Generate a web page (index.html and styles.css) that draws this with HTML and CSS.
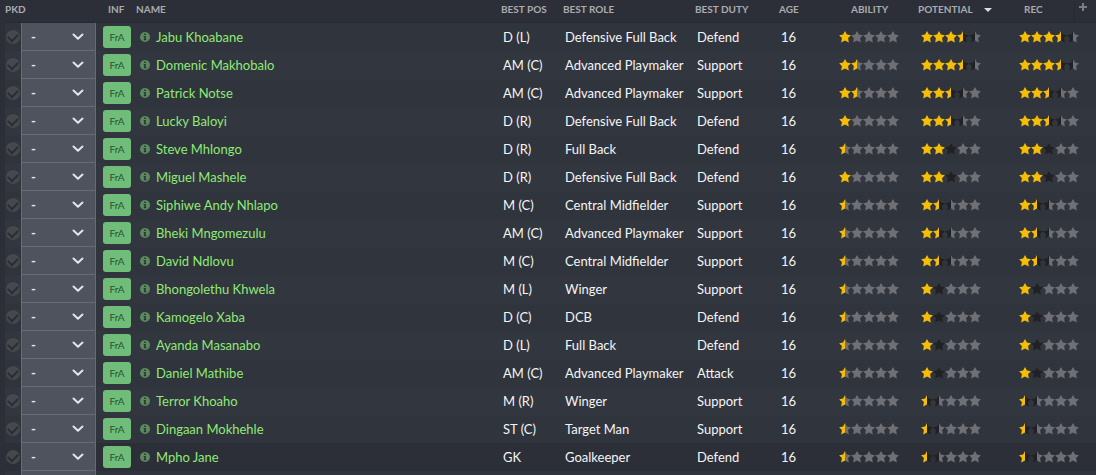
FILE: index.html
```html
<!DOCTYPE html>
<html lang="en">
<head>
    <meta charset="UTF-8">
    <meta name="viewport" content="width=device-width, initial-scale=1.0">
    <title>Squad</title>
    <link rel="stylesheet" href="styles.css">
</head>
<body>
    <svg class="sprite" aria-hidden="true">
        <symbol id="icon-chevron" viewBox="0 0 12 8">
            <path d="M1.5 1.5 6 5.8l4.5-4.3" fill="none" stroke="currentColor" stroke-width="2" stroke-linecap="round" stroke-linejoin="round"/>
        </symbol>
        <symbol id="icon-info" viewBox="0 0 10 10">
            <circle cx="5" cy="5" r="5" fill="#5b8a5e"/>
            <path d="M4.2 1.6h1.6v1.4H4.2zM3.7 4h2.1v3.2h.5v1H3.7v-1h.5V4.9h-.5z" fill="#2b3237"/>
        </symbol>
    </svg>

    <table class="squad">
        <colgroup>
            <col class="col-check">
            <col class="col-pick">
            <col class="col-inf">
            <col class="col-name">
            <col class="col-pos">
            <col class="col-role">
            <col class="col-duty">
            <col class="col-age">
            <col class="col-ability">
            <col class="col-potential">
            <col class="col-rec">
            <col class="col-add">
        </colgroup>
        <thead>
            <tr>
                <th colspan="2" class="head-pkd">PKD</th>
                <th class="head-inf">INF</th>
                <th class="head-name">NAME</th>
                <th>BEST POS</th>
                <th>BEST ROLE</th>
                <th>BEST DUTY</th>
                <th>AGE</th>
                <th class="head-ability">ABILITY</th>
                <th aria-sort="descending">POTENTIAL<span class="sort-arrow"></span></th>
                <th class="head-rec">REC</th>
                <th class="head-add"><button type="button" class="add-column" aria-label="Add column"></button></th>
            </tr>
        </thead>
        <tbody id="players"></tbody>
    </table>
    <script src="script.js"></script>
</body>
</html>
```

FILE: styles.css
```css
:root {
    --background: #2d2f38;
    --row: #30343c;
    --row-alt: #32363f;
    --line: #272a32;
    --select: #4e535e;
    --select-line: #666b77;
    --heading: #a9abae;
    --name: #8eea76;
    --badge: #6fbd78;
    --gold: #f6bd06;
    --dark: #202124;
    --grey: #6e7075;
}

* {
    margin: 0;
    padding: 0;
    box-sizing: border-box;
}

body {
    font-family: Lato, "Liberation Sans", sans-serif;
    font-size: 13px;
    color: #f4f5f6;
    background-color: var(--background);
}

.sprite {
    display: none;
}

.squad {
    width: 100%;
    padding-left: 5px;
    table-layout: fixed;
    border-collapse: separate;
    border-spacing: 0;
}

.col-check { width: 16px; }
.col-pick { width: 75px; }
.col-inf { width: 40px; }
.col-pos { width: 62px; }
.col-role { width: 132px; }
.col-duty { width: 84px; }
.col-age { width: 60px; }
.col-ability { width: 79px; }
.col-potential { width: 100px; }
.col-rec { width: 56px; }
.col-add { width: 22px; }

/* Header */
th {
    height: 23px;
    padding-bottom: 4px;
    border-bottom: 1px solid var(--line);
    font-size: 10px;
    font-weight: 700;
    line-height: 16px;
    color: var(--heading);
    text-align: left;
    vertical-align: middle;
    white-space: nowrap;
}

.head-inf {
    padding-left: 12px;
}

.head-ability {
    padding-left: 12px;
}

.head-rec {
    padding-left: 6px;
}

.sort-arrow {
    display: inline-block;
    margin-left: 11px;
    border: 4px solid transparent;
    border-top-color: #dcdddf;
    border-bottom: 0;
    vertical-align: middle;
}

.head-add {
    border-left: 1px solid var(--line);
}

.add-column {
    display: block;
    width: 8px;
    height: 8px;
    margin: -4px 0 0 4px;
    border: 0;
    background:
        linear-gradient(#7b7d82, #7b7d82) center / 8px 2px no-repeat,
        linear-gradient(#7b7d82, #7b7d82) center / 2px 8px no-repeat;
    cursor: pointer;
}

/* Rows */
td {
    height: 28px;
    line-height: 20px;
    vertical-align: middle;
    white-space: nowrap;
    background-color: var(--row);
}

tr:nth-child(even) td {
    background-color: var(--row-alt);
}

tr:nth-child(16) td {
    background-color: var(--background);
}

.pos,
.role,
.duty,
.age {
    padding-left: 2px;
}

.check input {
    display: grid;
    place-items: center;
    appearance: none;
    width: 14px;
    height: 14px;
    margin-left: 1px;
    border-radius: 50%;
    background-color: #45484d;
}

.check input::before {
    content: "";
    width: 8px;
    height: 5px;
    margin-bottom: 2px;
    border: solid #2b2e35;
    border-width: 0 0 2px 2px;
    transform: rotate(-45deg);
}

.squad tr .pick {
    background-color: var(--select);
    border: 1px solid var(--select-line);
    border-width: 0 1px 1px;
}

.picker {
    display: grid;
    grid-template-columns: 1fr 12px;
    align-items: center;
    padding-right: 11px;
}

.picker select {
    grid-area: 1 / 1 / 2 / 3;
    appearance: none;
    height: 27px;
    padding-left: 9px;
    border: 0;
    background: none;
    font: inherit;
    font-weight: 700;
    color: #e3e4e6;
}

.picker svg {
    grid-area: 1 / 2;
    width: 12px;
    height: 8px;
    color: #e3e4e6;
    pointer-events: none;
}

.badge {
    display: block;
    width: 28px;
    height: 22px;
    margin-left: 7px;
    border-radius: 3px;
    background-color: var(--badge);
    font-size: 10px;
    line-height: 23px;
    text-align: center;
    color: #2c5235;
}

.player {
    display: flex;
    align-items: center;
    gap: 6px;
    padding-left: 4px;
}

.player svg {
    width: 10px;
    height: 10px;
}

.player a {
    color: var(--name);
    text-decoration: none;
}

.potential {
    padding-left: 3px;
}

.rec {
    padding-left: 1px;
}

.squad .empty td {
    height: 4px;
    border-bottom: 0;
}

/* Five stars cut out of one bar: gold up to the rating, dark up to the possible rating */
.stars {
    --gold-end: calc(var(--rating) * 12px);
    --dark-end: calc(var(--possible) * 12px);
    display: block;
    width: 60px;
    height: 12px;
    background: linear-gradient(90deg, var(--gold) var(--gold-end), var(--dark) var(--gold-end) var(--dark-end), var(--grey) var(--dark-end));
    clip-path: path("M6 0l1.9 3.6 4 .6-2.8 2.9.7 4.3L6 9.6l-3.8 1.8.7-4.3L.1 4.2l4-.6zM18 0l1.9 3.6 4 .6-2.8 2.9.7 4.3L18 9.6l-3.8 1.8.7-4.3-2.8-2.9 4-.6zM30 0l1.9 3.6 4 .6-2.8 2.9.7 4.3L30 9.6l-3.8 1.8.7-4.3-2.8-2.9 4-.6zM42 0l1.9 3.6 4 .6-2.8 2.9.7 4.3L42 9.6l-3.8 1.8.7-4.3-2.8-2.9 4-.6zM54 0l1.9 3.6 4 .6-2.8 2.9.7 4.3L54 9.6l-3.8 1.8.7-4.3-2.8-2.9 4-.6z");
}
```

FILE: script.js
```js
// name, position, role, duty, ability, potential, possible potential
const players = [
    ["Jabu Khoabane", "D (L)", "Defensive Full Back", "Defend", 1, 3.5, 4.5],
    ["Domenic Makhobalo", "AM (C)", "Advanced Playmaker", "Support", 1.5, 3.5, 4.5],
    ["Patrick Notse", "AM (C)", "Advanced Playmaker", "Support", 1.5, 2.5, 3.5],
    ["Lucky Baloyi", "D (R)", "Defensive Full Back", "Defend", 1, 2.5, 3.5],
    ["Steve Mhlongo", "D (R)", "Full Back", "Defend", 0.5, 2, 3],
    ["Miguel Mashele", "D (R)", "Defensive Full Back", "Defend", 1, 2, 3],
    ["Siphiwe Andy Nhlapo", "M (C)", "Central Midfielder", "Support", 0.5, 1.5, 2.5],
    ["Bheki Mngomezulu", "AM (C)", "Advanced Playmaker", "Support", 0.5, 1.5, 2.5],
    ["David Ndlovu", "M (C)", "Central Midfielder", "Support", 0.5, 1.5, 2.5],
    ["Bhongolethu Khwela", "M (L)", "Winger", "Support", 0.5, 1, 2],
    ["Kamogelo Xaba", "D (C)", "DCB", "Defend", 0.5, 1, 2],
    ["Ayanda Masanabo", "D (L)", "Full Back", "Defend", 0.5, 1, 2],
    ["Daniel Mathibe", "AM (C)", "Advanced Playmaker", "Attack", 0.5, 1, 2],
    ["Terror Khoaho", "M (R)", "Winger", "Support", 0.5, 0.5, 1.5],
    ["Dingaan Mokhehle", "ST (C)", "Target Man", "Support", 0.5, 0.5, 1.5],
    ["Mpho Jane", "GK", "Goalkeeper", "Defend", 0.5, 0.5, 1.5]
];

function stars(rating, possible) {
    return `<span class="stars" role="img" aria-label="${rating} stars" style="--rating: ${rating}; --possible: ${possible}"></span>`;
}

const rows = players.map(([name, pos, role, duty, ability, potential, possible]) => `
    <tr>
        <td class="check"><input type="checkbox" aria-label="Pick ${name}"></td>
        <td class="pick">
            <div class="picker">
                <select aria-label="Position for ${name}"><option>-</option></select>
                <svg><use href="#icon-chevron"/></svg>
            </div>
        </td>
        <td><span class="badge">FrA</span></td>
        <td><div class="player"><svg><use href="#icon-info"/></svg><a href="#">${name}</a></div></td>
        <td class="pos">${pos}</td>
        <td class="role">${role}</td>
        <td class="duty">${duty}</td>
        <td class="age">16</td>
        <td>${stars(ability, ability)}</td>
        <td class="potential">${stars(potential, possible)}</td>
        <td class="rec" colspan="2">${stars(potential, possible)}</td>
    </tr>`);

// empty row under the last player
rows.push(`<tr class="empty"><td></td><td class="pick"></td><td colspan="10"></td></tr>`);

document.getElementById("players").innerHTML = rows.join("");
```
